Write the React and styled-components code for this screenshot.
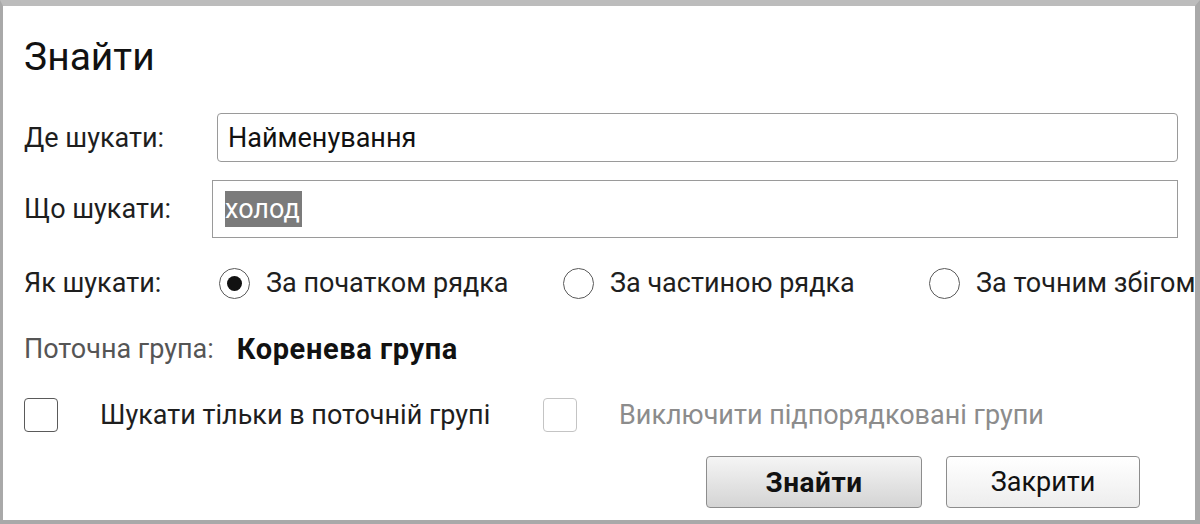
import styled, { createGlobalStyle } from 'styled-components';

const GlobalStyle = createGlobalStyle`
  html, body {
    margin: 0;
    padding: 0;
    background: #ffffff;
  }

  body {
    font-family: Roboto, 'Liberation Sans', sans-serif;
    color: #1a1a1a;
  }
`;

function App() {
  return (
    <>
      <GlobalStyle />
      <Dialog>
        <Title>Знайти</Title>
        <Row $mt={33} $h={49}>
          <Label>Де шукати:</Label>
          <Field $offset={5} $rounded>
            Найменування
          </Field>
        </Row>
        <Row $mt={18} $h={58}>
          <Label>Що шукати:</Label>
          <Field $pad={12}>
            <Selected>холод</Selected>
          </Field>
        </Row>
        <Row $mt={29} $h={32}>
          <Label>Як шукати:</Label>
          <Option $w={344} $first>
            <Radio $checked />
            За початком рядка
          </Option>
          <Option $w={366}>
            <Radio />
            За частиною рядка
          </Option>
          <Option>
            <Radio />
            За точним збігом
          </Option>
        </Row>
        <Row $mt={34} $h={32}>
          <GroupLabel>Поточна група:</GroupLabel>
          <GroupName>Коренева група</GroupName>
        </Row>
        <Row $mt={33} $h={33}>
          <CheckOption $w={519}>
            <Checkbox />
            Шукати тільки в поточній групі
          </CheckOption>
          <CheckOption $disabled>
            <Checkbox $disabled />
            Виключити підпорядковані групи
          </CheckOption>
        </Row>
        <Buttons>
          <Button $primary>Знайти</Button>
          <Button>Закрити</Button>
        </Buttons>
      </Dialog>
    </>
  );
}

const Dialog = styled.div`
  box-sizing: border-box;
  width: 1200px;
  height: 524px;
  border-top: 6px solid #bcbcbc;
  border-left: 3px solid #a9a9a9;
  border-right: 5px solid #a9a9a9;
  border-bottom: 4px solid #a9a9a9;
  padding: 28px 17px 0 21px;
  display: flex;
  flex-direction: column;
  overflow: hidden;
`;

const Title = styled.h1`
  margin: 0;
  height: 46px;
  font-size: 39px;
  line-height: 46px;
  font-weight: 400;
  color: #111;
`;

const Row = styled.div`
  display: flex;
  align-items: center;
  margin-top: ${(p) => p.$mt}px;
  height: ${(p) => p.$h}px;
  font-size: 27px;
  white-space: nowrap;
`;

const Label = styled.div`
  width: 188px;
  flex-shrink: 0;
  color: #1e1e1e;
`;

const Field = styled.div`
  box-sizing: border-box;
  flex: 1;
  height: 100%;
  margin-left: ${(p) => p.$offset || 0}px;
  padding-left: ${(p) => p.$pad || 10}px;
  display: flex;
  align-items: center;
  border: 1.5px solid #9a9a9a;
  border-radius: ${(p) => (p.$rounded ? 4 : 0)}px;
  background: #fff;
  color: #111;
`;

const Selected = styled.span`
  background: #7b7b7b;
  color: #fff;
  line-height: 36px;
  padding-right: 2px;
`;

const Option = styled.label`
  display: flex;
  align-items: center;
  gap: 16px;
  width: ${(p) => (p.$w ? `${p.$w}px` : 'auto')};
  flex-shrink: 0;
  margin-left: ${(p) => (p.$first ? 7 : 0)}px;
  color: #1e1e1e;
`;

const Radio = styled.span`
  box-sizing: border-box;
  width: 31px;
  height: 31px;
  border: 1.5px solid #5a5a5a;
  border-radius: 50%;
  display: flex;
  align-items: center;
  justify-content: center;
  flex-shrink: 0;

  &::after {
    content: '';
    display: ${(p) => (p.$checked ? 'block' : 'none')};
    width: 15px;
    height: 15px;
    border-radius: 50%;
    background: #111;
  }
`;

const GroupLabel = styled.span`
  color: #555;
  margin-right: 23px;
`;

const GroupName = styled.span`
  font-size: 29px;
  font-weight: 700;
  letter-spacing: 0.6px;
  color: #111;
`;

const CheckOption = styled.label`
  display: flex;
  align-items: center;
  gap: 42px;
  width: ${(p) => (p.$w ? `${p.$w}px` : 'auto')};
  flex-shrink: 0;
  color: ${(p) => (p.$disabled ? '#8c8c8c' : '#1e1e1e')};
`;

const Checkbox = styled.span`
  box-sizing: border-box;
  width: 34px;
  height: 34px;
  border: 1.5px solid ${(p) => (p.$disabled ? '#c4c4c4' : '#5a5a5a')};
  border-radius: 4px;
  background: #fff;
  flex-shrink: 0;
`;

const Buttons = styled.div`
  display: flex;
  justify-content: flex-end;
  gap: 24px;
  margin-top: 25px;
  padding-right: 38px;
`;

const Button = styled.button`
  box-sizing: border-box;
  width: ${(p) => (p.$primary ? 216 : 194)}px;
  height: 52px;
  border: 1.5px solid #8d8d8d;
  border-radius: 4px;
  background: ${(p) => (p.$primary
    ? 'linear-gradient(#f5f5f5, #d4d4d4)'
    : 'linear-gradient(#ffffff, #ededed)')};
  font-family: Roboto, 'Liberation Sans', sans-serif;
  font-size: ${(p) => (p.$primary ? 28 : 27)}px;
  font-weight: ${(p) => (p.$primary ? 700 : 400)};
  letter-spacing: ${(p) => (p.$primary ? 0.5 : 0)}px;
  color: #111;
  padding: 0;
`;

export default App;
